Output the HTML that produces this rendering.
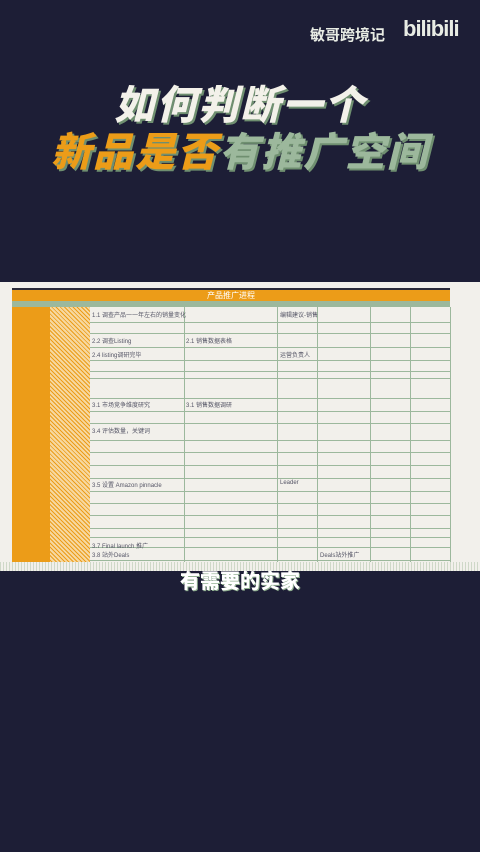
<!DOCTYPE html><html><head><meta charset="utf-8"><style>
body{margin:0;width:480px;height:852px;background:#1d1e36;position:relative;overflow:hidden;font-family:"Liberation Sans","Noto Sans CJK SC",sans-serif}
.wm{position:absolute;left:310px;top:24px;color:#e8ece4;font-size:15px;font-weight:bold}
.bl{position:absolute;left:403px;top:16px;color:#e8ece4;font-size:22px;font-weight:bold;letter-spacing:-1px}
.t{position:absolute;left:0;width:480px;text-align:center;font-size:40px;font-weight:900;font-style:italic;letter-spacing:2px;text-shadow:2px 2px 0 #6f8f70;line-height:44px}
.sheet{position:absolute;left:0;top:282px;width:480px;height:289px;background:#f2f0eb}
.row{position:absolute;left:90px;width:360px;height:0;border-top:1px solid #9cb89c}
.col{position:absolute;top:307px;height:255px;border-left:1px solid #9cb89c}
.tx{position:absolute;font-size:6px;color:#556;white-space:nowrap}
.sub{position:absolute;left:0;top:565px;width:480px;text-align:center;color:#fff;font-size:20px;font-weight:900;text-shadow:1px 1px 0 #8fae8f}
</style></head><body>
<div class="wm">敏哥跨境记</div><div class="bl">bilibili</div>
<div class="t" style="top:84px;color:#f3f1ea">如何判断一个</div>
<div class="t" style="top:131px"><span style="color:#ec9c18">新品是否</span><span style="color:#9cb89c">有推广空间</span></div>
<div class="sheet">
<div style="position:absolute;left:12px;top:6px;width:438px;height:12px;background:#ec9c18;border-top:2px solid #2a2a3a;color:#fff;font-size:8px;text-align:center;line-height:12px">产品推广进程</div>
<div style="position:absolute;left:12px;top:19px;width:438px;height:6px;background:#9cb89c"></div>
<div style="position:absolute;left:12px;top:25px;width:38px;height:255px;background:#ec9c18"></div>
<div style="position:absolute;left:50px;top:25px;width:40px;height:262px;background:repeating-linear-gradient(45deg,#ec9c18 0 1px,#f6d8a0 1px 3px)"></div>
<div style="position:absolute;left:0;top:280px;width:480px;height:9px;background:repeating-linear-gradient(90deg,#cfd8c8 0 1px,#f2f0eb 1px 3px)"></div>
</div>
<div class="col" style="left:184px"></div><div class="col" style="left:277px"></div><div class="col" style="left:317px"></div><div class="col" style="left:370px"></div><div class="col" style="left:410px"></div><div class="col" style="left:450px"></div>
<div class="row" style="top:322px"></div><div class="row" style="top:333px"></div><div class="row" style="top:347px"></div><div class="row" style="top:360px"></div><div class="row" style="top:371px"></div><div class="row" style="top:378px"></div><div class="row" style="top:398px"></div><div class="row" style="top:411px"></div><div class="row" style="top:423px"></div><div class="row" style="top:440px"></div><div class="row" style="top:452px"></div><div class="row" style="top:465px"></div><div class="row" style="top:478px"></div><div class="row" style="top:491px"></div><div class="row" style="top:503px"></div><div class="row" style="top:515px"></div><div class="row" style="top:528px"></div><div class="row" style="top:537px"></div><div class="row" style="top:547px"></div><div class="row" style="top:560px"></div>
<div class="tx" style="left:92px;top:310px">1.1 调查产品一一年左右的销量变化</div>
<div class="tx" style="left:280px;top:310px">编辑建议-销售</div>
<div class="tx" style="left:92px;top:336px">2.2 调查Listing</div>
<div class="tx" style="left:186px;top:336px">2.1 销售数据表格</div>
<div class="tx" style="left:92px;top:350px">2.4 listing调研完毕</div>
<div class="tx" style="left:280px;top:350px">运营负责人</div>
<div class="tx" style="left:92px;top:400px">3.1 市场竞争维度研究</div>
<div class="tx" style="left:186px;top:400px">3.1 销售数据调研</div>
<div class="tx" style="left:92px;top:426px">3.4 评估数量，关键词</div>
<div class="tx" style="left:92px;top:480px">3.5 设置 Amazon pinnacle</div>
<div class="tx" style="left:280px;top:480px">Leader</div>
<div class="tx" style="left:92px;top:541px">3.7 Final launch 推广</div>
<div class="tx" style="left:92px;top:550px">3.8 站外Deals</div>
<div class="tx" style="left:320px;top:550px">Deals站外推广</div>
<div style="position:absolute;left:0;top:571px;width:480px;height:281px;background:#1d1e36"></div>
<div class="sub">有需要的实家</div>
</body></html>
